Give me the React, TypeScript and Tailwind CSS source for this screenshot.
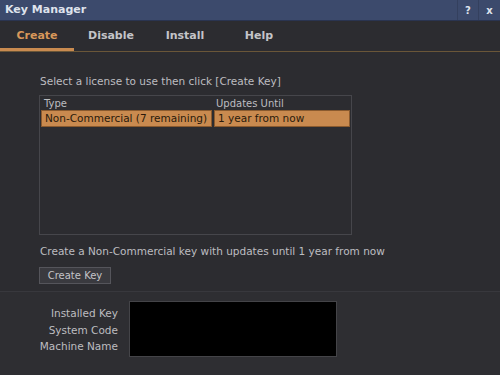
import React from "react";

const tabs = ["Create", "Disable", "Install", "Help"];

const App = () => {
  return (
    <div className="w-[500px] h-[375px] flex flex-col bg-[#2c2c30] text-[#bdbdc0] overflow-hidden font-['DejaVu_Sans',sans-serif]">
      {/* title bar */}
      <div className="h-[21px] flex items-stretch bg-[#3c4a6c] border-b border-[#2a3450]">
        <div className="flex-1 pl-[5px] flex items-center text-[11px] font-bold text-[#dfe3ec]">Key Manager</div>
        <div className="w-[21px] flex items-center justify-center border-l border-[#34405e] text-[10px] font-bold text-[#dfe3ec]">?</div>
        <div className="w-[22px] flex items-center justify-center border-l border-[#34405e] text-[10px] font-bold text-[#dfe3ec]">x</div>
      </div>

      {/* tabs */}
      <div className="h-[31px] flex items-end border-b border-[#6a5638]">
        {tabs.map((t, i) => (
          <div
            key={t}
            className={
              i === 0
                ? "w-[74px] h-full flex items-center justify-center text-[11px] font-bold text-[#d8975a] border-b-[3px] border-[#c98b50] pt-[4px]"
                : "w-[74px] h-full flex items-center justify-center text-[11px] font-bold text-[#c4c4c8] pt-[1px]"
            }
          >
            {t}
          </div>
        ))}
      </div>

      {/* create pane */}
      <div className="flex-1 flex flex-col pl-[39px] pt-[22px]">
        <div className="text-[10.5px] pl-[1px] leading-[14px]">Select a license to use then click [Create Key]</div>
        <div className="mt-[7px] w-[313px] h-[140px] border border-[#46464b] flex flex-col">
          <div className="flex text-[10px] h-[14px] items-center">
            <div className="w-[172px] pl-[4px]">Type</div>
            <div className="pl-[4px]">Updates Until</div>
          </div>
          <div className="flex h-[17px] px-[1px] gap-[2px] text-[10.5px] text-[#2a1a0c]">
            <div className="w-[171px] bg-[#c98a4f] border border-[#8a5a2e] flex items-center pl-[3px]">Non-Commercial (7 remaining)</div>
            <div className="flex-1 bg-[#c98a4f] border border-[#8a5a2e] flex items-center pl-[3px]">1 year from now</div>
          </div>
        </div>
        <div className="mt-[9px] text-[10.5px] pl-[1px] leading-[14px]">Create a Non-Commercial key with updates until 1 year from now</div>
        <div className="mt-[9px] w-[72px] h-[17px] bg-[#3a3a3f] border border-[#55555b] flex items-center justify-center text-[10px] text-[#c4c4c8]">Create Key</div>
      </div>

      {/* installed key pane */}
      <div className="h-[84px] bg-[#2e2e32] border-t border-[#38383d] flex pt-[9px]">
        <div className="w-[118px] flex flex-col items-end pt-[4px] text-[10.5px] leading-[16.5px]">
          <div>Installed Key</div>
          <div>System Code</div>
          <div>Machine Name</div>
        </div>
        <div className="ml-[11px] w-[208px] h-[56px] bg-black border border-[#444448]"></div>
      </div>
    </div>
  );
};

export default App;
